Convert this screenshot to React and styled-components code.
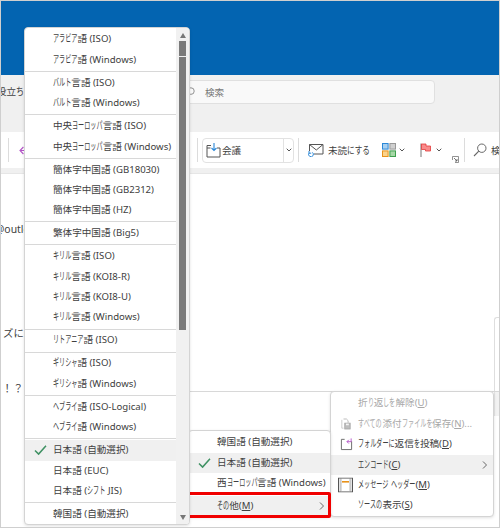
// App.jsx
import React from "react";
import styled, { createGlobalStyle } from "styled-components";

const GlobalStyle = createGlobalStyle`
  html, body {
    margin: 0;
    padding: 0;
    background: #fff;
  }
  body {
    font-family: "Noto Sans", "Noto Sans CJK JP", sans-serif;
    font-size: 9.6px;
    color: #404040;
  }
`;

// Page frame and window chrome
const Frame = styled.div`
  position: relative;
  box-sizing: border-box;
  width: 500px;
  height: 528px;
  border: 1px solid #cfcfcf;
  overflow: hidden;
  display: flex;
  flex-direction: column;
  background: #fff;
`;

const TitleBar = styled.div`
  height: 74px;
  flex: none;
  background: #0364b1;
`;

const SearchBand = styled.div`
  height: 57px;
  flex: none;
  background: #f0f0f0;
  display: flex;
  align-items: flex-start;
  padding-top: 5px;
  box-sizing: border-box;
`;

const ClippedLabel = styled.div`
  width: 180px;
  margin-left: -4px;
  line-height: 24px;
  white-space: nowrap;
  flex: none;
`;

const SearchBox = styled.div`
  box-sizing: border-box;
  width: 255px;
  height: 24px;
  margin-left: 3px;
  background: #f9f9f9;
  border: 1px solid #e0e0e0;
  border-radius: 4px;
  display: flex;
  align-items: center;
  gap: 10px;
  padding-left: 3px;
  color: #777;
`;

const Ribbon = styled.div`
  height: 36px;
  flex: none;
  display: flex;
  align-items: center;
  padding-left: 7px;
  background: #fff;
`;

const RibbonDivider = styled.div`
  width: 1px;
  height: 24px;
  flex: none;
  background: #dcdcdc;
  margin-left: ${(p) => p.$ml || 0}px;
`;

const RibbonSlot = styled.div`
  flex: none;
  display: flex;
  align-items: center;
  gap: ${(p) => p.$gap || 0}px;
  margin-left: ${(p) => p.$ml || 0}px;
  margin-top: ${(p) => p.$mt || 0}px;
  white-space: nowrap;
`;

const Combo = styled.div`
  box-sizing: border-box;
  width: 92px;
  height: 25px;
  margin-left: 4px;
  flex: none;
  display: flex;
  border: 1px solid #e2e2e2;
  border-radius: 4px;
`;

const ComboValue = styled.div`
  flex: 1;
  display: flex;
  align-items: center;
  gap: 1px;
  padding-left: 3px;
`;

const ComboArrow = styled.div`
  width: 9px;
  display: flex;
  align-items: center;
  justify-content: center;
  border-left: 1px solid #e2e2e2;
`;

const RibbonEdge = styled.div`
  height: 5px;
  flex: none;
  background: #f0f0f0;
  border-bottom: 1px solid #e6e6e6;
`;

// Message body behind the menus
const Body = styled.div`
  flex: 1;
  display: flex;
  min-height: 0;
`;

const TextColumn = styled.div`
  width: 24px;
  flex: none;
  font-size: 10.4px;
`;

const BodyLine = styled.div`
  height: 14px;
  line-height: 14px;
  white-space: nowrap;
  margin-top: ${(p) => p.$mt}px;
  margin-left: ${(p) => p.$ml}px;
  letter-spacing: ${(p) => p.$ls || 0}px;
`;

const ReadingPane = styled.div`
  flex: 1;
  display: flex;
  flex-direction: column;
`;

const PaneUpper = styled.div`
  height: 218px;
  flex: none;
  box-sizing: border-box;
  display: flex;
  justify-content: flex-end;
  align-items: flex-end;
  border-bottom: 1px solid #d8d8d8;
`;

const SideTab = styled.div`
  box-sizing: border-box;
  width: 5px;
  height: 74px;
  border: 1px solid #dedede;
  border-right: none;
  border-bottom: none;
  border-top-left-radius: 3px;
`;

const PaneLower = styled.div`
  flex: 1;
  display: flex;
  justify-content: flex-end;
`;

const SideStrip = styled.div`
  box-sizing: border-box;
  width: 5px;
  height: 24px;
  border-left: 1px solid #e4e4e4;
  background: #f2f2f2;
`;

// Context menus
const Menu = styled.div`
  position: absolute;
  box-sizing: border-box;
  left: ${(p) => p.$x}px;
  top: ${(p) => p.$y}px;
  width: ${(p) => p.$w}px;
  height: ${(p) => p.$h}px;
  z-index: ${(p) => p.$z};
  background: #fff;
  border: 1px solid #d4d4d4;
  border-radius: 4px;
  box-shadow: 0 1px 3px rgba(0, 0, 0, 0.12);
  overflow: hidden;
  display: flex;
`;

const MenuList = styled.div`
  flex: 1;
  min-width: 0;
  padding-top: 1.4px;
`;

const MenuRow = styled.div`
  position: relative;
  height: 20.4px;
  line-height: 20.4px;
  padding-left: ${(p) => p.$indent}px;
  white-space: nowrap;
  background: ${(p) => (p.$active ? "#f0f0f0" : "transparent")};
  color: ${(p) => (p.$disabled ? "#a8a8a8" : "#404040")};
`;

const MenuSeparator = styled.div`
  height: 1px;
  margin: 0.8px 0;
  background: #d8d8d8;
`;

const RowIcon = styled.span`
  position: absolute;
  left: ${(p) => p.$left}px;
  top: 50%;
  transform: translateY(-50%);
  display: flex;
`;

const RowArrow = styled.span`
  position: absolute;
  right: 5px;
  top: 50%;
  transform: translateY(-50%);
  display: flex;
`;

const Scrollbar = styled.div`
  width: 13px;
  flex: none;
  background: #f1f1f1;
  display: flex;
  flex-direction: column;
  align-items: center;
  position: relative;
`;

const ScrollUp = styled.div`
  margin-top: 5px;
  width: 0;
  height: 0;
  border-left: 3.5px solid transparent;
  border-right: 3.5px solid transparent;
  border-bottom: 5px solid #777;
`;

const ScrollDown = styled.div`
  position: absolute;
  bottom: 4px;
  width: 0;
  height: 0;
  border-left: 3.5px solid transparent;
  border-right: 3.5px solid transparent;
  border-top: 5px solid #777;
`;

const ThumbCap = styled.div`
  margin-top: 3px;
  width: 7px;
  height: 15px;
  background: #7a7a7a;
`;

const Thumb = styled.div`
  margin-top: 1px;
  width: 7px;
  height: 273px;
  background: #7a7a7a;
`;

const RedBox = styled.div`
  position: absolute;
  box-sizing: border-box;
  left: 170px;
  top: 491px;
  width: 160px;
  height: 25.5px;
  z-index: 3;
  border: 3px solid #f00000;
  border-radius: 2px;
`;

// Kana in the reference are much narrower than the kanji
const KanaBox = styled.span`
  display: inline-block;
  width: ${(p) => p.$n * p.$k}px;
  height: 1em;
  line-height: 1em;
  vertical-align: baseline;
`;

const KanaInner = styled.span`
  display: inline-block;
  font-size: 10.4px;
  transform: scaleX(${(p) => p.$k / 10.4});
  transform-origin: 0 50%;
  white-space: nowrap;
`;

const Mnemonic = styled.span`
  text-decoration: underline;
  text-underline-offset: 1px;
`;

const Narrow = ({ text, k = 6.1 }) =>
  text.split(/([\u3040-\u30ff]+)/).map((part, i) =>
    /[\u3040-\u30ff]/.test(part) ? (
      <KanaBox key={i} $n={part.length} $k={k}>
        <KanaInner $k={k}>{part}</KanaInner>
      </KanaBox>
    ) : (
      part
    )
  );

const Label = ({ text, mn, tail }) => (
  <>
    <Narrow text={text} />
    {mn && (
      <>
        (<Mnemonic>{mn}</Mnemonic>){tail}
      </>
    )}
  </>
);

// Icons
const Check = () => (
  <svg width="13" height="11" viewBox="0 0 13 11" fill="none">
    <path d="M1 6l3.6 3.6L12 1.2" stroke="#3f9163" strokeWidth="1.5" />
  </svg>
);

const Chevron = () => (
  <svg width="6" height="9" viewBox="0 0 6 9" fill="none">
    <path d="M1 1l3.5 3.5L1 8" stroke="#666" strokeWidth="1" />
  </svg>
);

const Caret = () => (
  <svg width="6" height="4" viewBox="0 0 6 4" fill="none">
    <path d="M.7.7L3 3l2.3-2.3" stroke="#555" strokeWidth="1" />
  </svg>
);

const SearchGlyph = ({ size = 14, color = "#666" }) => (
  <svg width={size} height={size} viewBox="0 0 14 14" fill="none">
    <circle cx="8.8" cy="5.2" r="4.2" stroke={color} strokeWidth="1" />
    <path d="M5.8 8.2L1 13" stroke={color} strokeWidth="1.1" />
  </svg>
);

const BackArrow = () => (
  <svg width="8" height="9" viewBox="0 0 8 9" fill="none">
    <path d="M4.4 1L1 4.5 4.4 8M1 4.5h7" stroke="#b455c8" strokeWidth="1.1" />
  </svg>
);

const MoveIcon = () => (
  <svg width="15" height="15" viewBox="0 0 15 15" fill="none">
    <path d="M5 2.5H1v11.5h13V5h-3M1 5h3.5" stroke="#555" strokeWidth="1" />
    <path d="M8 0v7M5.5 5L8 7.5 10.5 5" stroke="#2b88d8" strokeWidth="1.1" />
  </svg>
);

const UnreadIcon = () => (
  <svg width="16" height="14" viewBox="0 0 16 14" fill="none">
    <path d="M1.5 8V1.5h13.5v9.5H6" stroke="#555" strokeWidth="1" />
    <path d="M1.5 1.5l6.8 5.5 6.7-5.5" stroke="#555" strokeWidth="1" />
    <path d="M1 10a2.4 2.4 0 1 0 3.4-.6M1 8v2.2h2.2" stroke="#2b88d8" strokeWidth="1" />
  </svg>
);

const CategoryIcon = () => (
  <svg width="14" height="14" viewBox="0 0 14 14">
    <rect x=".5" y=".5" width="5.6" height="5.6" fill="#a8d0f0" stroke="#2b88d8" />
    <rect x="7.9" y=".5" width="5.6" height="5.6" fill="#d0d0d0" stroke="#999" />
    <rect x=".5" y="7.9" width="5.6" height="5.6" fill="#fbd38a" stroke="#e8921a" />
    <rect x="7.9" y="7.9" width="5.6" height="5.6" fill="#a6d8a6" stroke="#3f9f4f" />
  </svg>
);

const FlagIcon = () => (
  <svg width="11" height="14" viewBox="0 0 11 14" fill="none">
    <path d="M1 .5V14" stroke="#777" strokeWidth="1" />
    <path d="M1.5 1H6v2h4.5v5H5.5V6.5h-4z" fill="#f98b8b" stroke="#e23b3b" strokeWidth=".8" />
  </svg>
);

const LauncherIcon = () => (
  <svg width="7" height="7" viewBox="0 0 7 7" fill="none">
    <path d="M.5 4V.5H6.5V6.5H3" stroke="#777" strokeWidth=".8" />
    <path d="M2 2l3 3M5 3v2H3" stroke="#555" strokeWidth=".8" />
  </svg>
);

const AttachSaveIcon = () => (
  <svg width="10" height="12" viewBox="0 0 12 13" fill="none">
    <path d="M1 1.5v10h2" stroke="#c2c2c2" strokeWidth="1" />
    <path d="M3 .5h3.5l2 2V5" stroke="#b0b0b0" strokeWidth="1" />
    <rect x="4.5" y="5.5" width="6.5" height="7" fill="#bdbdbd" stroke="#a6a6a6" />
    <rect x="6" y="6" width="3.4" height="2" fill="#f4f4f4" />
  </svg>
);

const FolderReplyIcon = () => (
  <svg width="13" height="14" viewBox="0 0 14 14" fill="none">
    <path d="M5 2H1.5v11h11V4" stroke="#666" strokeWidth="1" />
    <path d="M12 1v3.5H7.5M9.5 2.5l-2 2 2 2" stroke="#b455c8" strokeWidth="1" />
  </svg>
);

const HeaderIcon = () => (
  <svg width="15" height="15" viewBox="0 0 15 15" fill="none">
    <rect x=".5" y=".5" width="14" height="14" fill="#e4e4e4" stroke="#555" />
    <rect x="3" y="1" width="9" height="13" fill="#fff" stroke="#888" strokeWidth=".6" />
    <rect x="4" y="3.5" width="7" height="1.6" fill="#e8921a" />
  </svg>
);

const encodings = [
  ["アラビア語 (ISO)", "アラビア語 (Windows)"],
  ["バルト言語 (ISO)", "バルト言語 (Windows)"],
  ["中央ヨーロッパ言語 (ISO)", "中央ヨーロッパ言語 (Windows)"],
  ["簡体字中国語 (GB18030)", "簡体字中国語 (GB2312)", "簡体字中国語 (HZ)"],
  ["繁体字中国語 (Big5)"],
  ["キリル言語 (ISO)", "キリル言語 (KOI8-R)", "キリル言語 (KOI8-U)", "キリル言語 (Windows)"],
  ["リトアニア語 (ISO)"],
  ["ギリシャ語 (ISO)", "ギリシャ語 (Windows)"],
  ["ヘブライ語 (ISO-Logical)", "ヘブライ語 (Windows)"],
  ["日本語 (自動選択)", "日本語 (EUC)", "日本語 (シフト JIS)"],
  ["韓国語 (自動選択)"],
];

const moreItems = [
  { text: "折り返しを解除", mn: "U", disabled: true },
  { text: "すべての添付ファイルを保存", mn: "N", tail: "...", disabled: true, icon: <AttachSaveIcon />, iconLeft: 10 },
  { text: "フォルダーに返信を投稿", mn: "D", icon: <FolderReplyIcon />, iconLeft: 9 },
  { text: "エンコード", mn: "C", active: true, arrow: true },
  { text: "メッセージ ヘッダー", mn: "M", icon: <HeaderIcon />, iconLeft: 7 },
  { text: "ソースの表示", mn: "S" },
];

const App = () => (
  <>
    <GlobalStyle />
    <Frame>
      <TitleBar />
      <SearchBand>
        <ClippedLabel>
          <Narrow text="役立ち情報" k={8} />
        </ClippedLabel>
        <SearchBox>
          <SearchGlyph size={11} color="#777" />
          検索
        </SearchBox>
      </SearchBand>
      <Ribbon>
        <RibbonDivider />
        <RibbonSlot $ml={10}>
          <BackArrow />
        </RibbonSlot>
        <RibbonDivider $ml={170} />
        <Combo>
          <ComboValue>
            <MoveIcon />
            会議
          </ComboValue>
          <ComboArrow>
            <Caret />
          </ComboArrow>
        </Combo>
        <RibbonDivider $ml={4} />
        <RibbonSlot $ml={9} $gap={4}>
          <UnreadIcon />
          <span>
            <Narrow text="未読にする" k={7.6} />
          </span>
        </RibbonSlot>
        <RibbonSlot $ml={12} $gap={3}>
          <CategoryIcon />
          <Caret />
        </RibbonSlot>
        <RibbonSlot $ml={15} $gap={5}>
          <FlagIcon />
          <Caret />
        </RibbonSlot>
        <RibbonSlot $ml={10} $mt={18}>
          <LauncherIcon />
        </RibbonSlot>
        <RibbonDivider $ml={5} />
        <RibbonSlot $ml={8} $gap={4}>
          <SearchGlyph size={14} />
          検索
        </RibbonSlot>
      </Ribbon>
      <RibbonEdge />
      <Body>
        <TextColumn>
          <BodyLine $mt={48} $ml={-6}>@outlook.jp</BodyLine>
          <BodyLine $mt={90} $ml={2}>ズに</BodyLine>
          <BodyLine $mt={41} $ml={1} $ls={0.6}>！？</BodyLine>
        </TextColumn>
        <ReadingPane>
          <PaneUpper>
            <SideTab />
          </PaneUpper>
          <PaneLower>
            <SideStrip />
          </PaneLower>
        </ReadingPane>
      </Body>

      <Menu $x={23} $y={26} $w={166} $h={498} $z={4}>
        <MenuList>
          {encodings.map((group, g) => (
            <React.Fragment key={g}>
              {g > 0 && <MenuSeparator />}
              {group.map((name) => {
                const selected = name === "日本語 (自動選択)";
                return (
                  <MenuRow key={name} $indent={28} $active={selected}>
                    {selected && (
                      <RowIcon $left={9}>
                        <Check />
                      </RowIcon>
                    )}
                    <Narrow text={name} />
                  </MenuRow>
                );
              })}
            </React.Fragment>
          ))}
        </MenuList>
        <Scrollbar>
          <ScrollUp />
          <ThumbCap />
          <Thumb />
          <ScrollDown />
        </Scrollbar>
      </Menu>

      <Menu $x={187} $y={429} $w={143} $h={87} $z={2}>
        <MenuList>
          <MenuRow $indent={28}>
            <Narrow text="韓国語 (自動選択)" />
          </MenuRow>
          <MenuRow $indent={28} $active>
            <RowIcon $left={9}>
              <Check />
            </RowIcon>
            <Narrow text="日本語 (自動選択)" />
          </MenuRow>
          <MenuRow $indent={28}>
            <Narrow text="西ヨーロッパ言語 (Windows)" />
          </MenuRow>
          <MenuSeparator />
          <MenuRow $indent={28} $active>
            <Label text="その他" mn="M" />
            <RowArrow>
              <Chevron />
            </RowArrow>
          </MenuRow>
        </MenuList>
      </Menu>

      <Menu $x={329} $y={390} $w={164} $h={126} $z={1}>
        <MenuList>
          {moreItems.map((item) => (
            <MenuRow key={item.text} $indent={27} $active={item.active} $disabled={item.disabled}>
              {item.icon && <RowIcon $left={item.iconLeft}>{item.icon}</RowIcon>}
              <Label text={item.text} mn={item.mn} tail={item.tail} />
              {item.arrow && (
                <RowArrow>
                  <Chevron />
                </RowArrow>
              )}
            </MenuRow>
          ))}
        </MenuList>
      </Menu>

      <RedBox />
    </Frame>
  </>
);

export default App;
